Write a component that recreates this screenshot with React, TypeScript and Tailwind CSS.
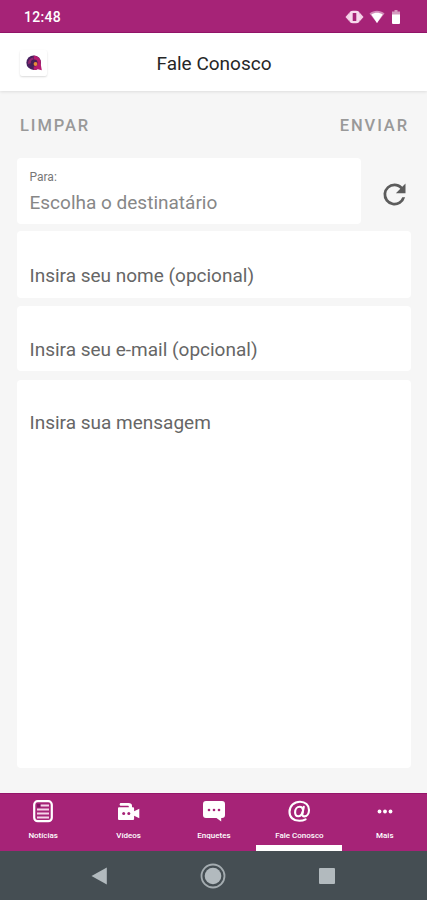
import { useState, type ReactNode } from 'react'

function NewsIcon() {
  return <svg width="22" height="24" viewBox="0 0 22 24" fill="none" stroke="#fff">
    <rect x="2.200" y="2.200" width="17.600" height="20" rx="3.500" strokeWidth="2.200" />
    <path d="M5 6.500h12M5 10.500h12M5 14.500h12M5 18.500h12" strokeWidth="1.800" stroke="#f3d5e9" />
    <rect x="5" y="5" width="3.600" height="3.400" fill="#7d1560" stroke="none" />
  </svg>
}

function VideoIcon() {
  return <svg width="24" height="24" viewBox="0 0 24 24" fill="#fff">
    <path d="M4 4h7.500c2.200 0 3.500 1 3.500 2.800v1.500h.7c.9 0 1.400.5 1.400 1.400v2.500l5.200-2.500v9.600l-5.200-2.500v2.900c0 .9-.5 1.400-1.400 1.400H2.400c-.9 0-1.400-.5-1.400-1.400v-10c0-.9.5-1.400 1.400-1.400h9.400v-.5c0-.7-.4-1-1-1H4C2.200 6.800 2.200 4 4 4z" />
    <circle cx="6.700" cy="14.500" r="1.500" fill="#a62377" />
    <circle cx="11.800" cy="14.500" r="1.500" fill="#a62377" />
  </svg>
}

function PollIcon() {
  return <svg width="24" height="24" viewBox="0 0 24 24" fill="#fff">
    <path d="M4 2h16a3 3 0 0 1 3 3v11a3 3 0 0 1-3 3h-.8v3.500L14.500 19H4a3 3 0 0 1-3-3V5a3 3 0 0 1 3-3z" />
    <g fill="#a62377"><circle cx="7" cy="11" r="1.300" /><circle cx="12" cy="11" r="1.300" /><circle cx="17" cy="11" r="1.300" /></g>
  </svg>
}

function AtIcon() {
  return <svg width="24" height="24" viewBox="0 0 24 24" fill="none" stroke="#fff" strokeWidth="2.100" strokeLinecap="round">
    <path d="M18.600 20.300c-1.800 1-4 1.500-6.200 1.500C6.300 21.800 2.500 18.200 2.500 13 2.500 7 7.200 2.700 13 2.700c5.400 0 9 3.500 9 8.200 0 4-2.200 6.500-4.600 6.500-1.700 0-2.300-1.200-2-2.700l1.400-6.900" />
    <path d="M15.900 10.600c-.3-1.800-1.500-2.800-3.200-2.800-2.700 0-4.600 2.500-4.600 5.500 0 2.300 1.200 3.900 3.100 3.900 2.100 0 3.800-1.700 4.400-4.200" />
  </svg>
}

function MoreIcon() {
  return <svg width="24" height="24" viewBox="0 0 24 24" fill="#fff">
    <circle cx="6.500" cy="12.500" r="1.900" /><circle cx="12" cy="12.500" r="1.900" /><circle cx="17.500" cy="12.500" r="1.900" />
  </svg>
}

const tabs: { label: string; icon: ReactNode }[] = [
  { label: 'Notícias', icon: <NewsIcon /> },
  { label: 'Vídeos', icon: <VideoIcon /> },
  { label: 'Enquetes', icon: <PollIcon /> },
  { label: 'Fale Conosco', icon: <AtIcon /> },
  { label: 'Mais', icon: <MoreIcon /> },
]

function StatusBar() {
  return <div className="h-[33px] shrink-0 bg-[#a62377] border-b border-[#94156a] flex items-center justify-between pl-6 pr-[27px] pt-[2px] text-white">
    <span className="text-[14px] font-medium tracking-[0.3px]">12:48</span>
    <div className="flex items-center">
      <svg width="19" height="16" viewBox="0 0 19 16" className="mr-[5px]">
        <path d="M.5 8 4 4v8zM18.500 8 15 4v8z" fill="#f3d0e6" />
        <rect x="4" y="1.800" width="11" height="12.400" rx="4" fill="#f6d9ec" />
        <rect x="7.700" y="4" width="3.600" height="8" rx=".5" fill="#a62377" />
      </svg>
      <svg width="16" height="14" viewBox="0 0 16 14" className="mr-[7px]">
        <path d="M.5 3.500C5-.3 11-.3 15.500 3.500L8 13z" fill="#d28ab8" />
        <path d="M2.300 4.500c3.500-2.200 7.900-2.200 11.400 0L8 13z" fill="#fff" />
      </svg>
      <svg width="8" height="14" viewBox="0 0 8 14">
        <path d="M2.500 0h3v1.500H8V5H0V1.500h2.500z" fill="#d59abf" />
        <path d="M0 4.500h8V13a1 1 0 0 1-1 1H1a1 1 0 0 1-1-1z" fill="#fff" />
      </svg>
    </div>
  </div>
}

function Header() {
  return <header className="relative z-10 h-[58px] shrink-0 bg-white flex items-center shadow-[0_1px_3px_rgba(0,0,0,0.1)]">
    <div className="w-[27px] ml-5 h-[26px] mt-[1px] rounded-[2px] bg-white shadow-[0_1px_2px_rgba(0,0,0,0.15)] flex items-center justify-center">
      <svg width="18" height="18" viewBox="0 0 18 18">
        <circle cx="8.700" cy="8.700" r="7.300" fill="#49205f" />
        <path d="M8.700 1.400a7.300 7.300 0 0 1 7.100 9l1 5.800-4-1A7.300 7.300 0 0 1 8.700 16z" fill="#b51b70" />
        <path d="M3 10a6 6 0 0 1 5-6.500l1 5z" fill="#8f266f" />
        <circle cx="9.200" cy="9" r="3.400" fill="#452056" />
        <circle cx="10.500" cy="10" r="1.900" fill="#e98b3a" />
      </svg>
    </div>
    <h1 className="flex-1 text-center pr-[46px] pt-[4px] text-[19px] text-[#262626]">Fale Conosco</h1>
  </header>
}

const fieldClass = 'block w-full bg-white rounded-[4px] px-[12.5px] text-[19px] leading-[24px] text-[#505050] placeholder:text-[#666] placeholder:opacity-100 outline-none'

export default function App() {
  const [nome, setNome] = useState('')
  const [email, setEmail] = useState('')
  const [mensagem, setMensagem] = useState('')

  const limpar = () => {
    setNome('')
    setEmail('')
    setMensagem('')
  }

  return <div className="w-full h-[900px] flex flex-col overflow-hidden bg-[#f6f6f6] font-[Roboto,sans-serif]">
    <StatusBar />
    <Header />
    <main className="flex-1 flex flex-col pl-[17px] pr-4 min-h-0">
      <div className="h-[67px] shrink-0 flex items-center justify-between pl-[3px] pr-[2px] pt-[3px] text-[16.5px] font-medium tracking-[1.9px] text-[#999]">
        <button type="button" onClick={limpar}>LIMPAR</button>
        <button type="button">ENVIAR</button>
      </div>
      <div className="flex items-center shrink-0">
        <button type="button" className="w-[344px] h-[66px] bg-white rounded-[4px] px-[12.5px] pt-[11px] flex flex-col items-start">
          <span className="text-[12px] leading-4 text-[#777]">Para:</span>
          <span className="text-[19px] leading-6 mt-[6px] text-[#878787]">Escolha o destinatário</span>
        </button>
        <button type="button" aria-label="Recarregar" className="ml-[17px] mt-[7px]">
          <svg width="33" height="33" viewBox="0 0 24 24" fill="#5c5c5c">
            <path d="M17.650 6.350A7.958 7.958 0 0 0 12 4a8 8 0 1 0 7.730 10h-2.080A6 6 0 1 1 12 6c1.660 0 3.140.69 4.220 1.780L13 11h7V4z" />
          </svg>
        </button>
      </div>
      <input value={nome} onChange={event => setNome(event.target.value)} placeholder="Insira seu nome (opcional)" className={`${fieldClass} mt-[7px] h-[67px] pt-[21px] shrink-0`} />
      <input value={email} onChange={event => setEmail(event.target.value)} placeholder="Insira seu e-mail (opcional)" className={`${fieldClass} mt-2 h-[65px] pt-[21px] shrink-0`} />
      <textarea value={mensagem} onChange={event => setMensagem(event.target.value)} placeholder="Insira sua mensagem" className={`${fieldClass} mt-[9px] h-[388px] pt-[31px] shrink-0 resize-none`} />
    </main>
    <nav className="h-[58px] shrink-0 bg-[#a62377] border-t border-[#94156a] grid grid-cols-5">
      {tabs.map(tab => <button key={tab.label} type="button" className="flex flex-col items-center pt-[5px] pl-[1px] text-white">
        <span className="h-6">{tab.icon}</span>
        <span className="text-[8px] leading-[10px] mt-[8px] font-medium whitespace-nowrap">{tab.label}</span>
        {tab.label === 'Fale Conosco' && <span className="mt-auto h-[6px] w-[86px] bg-white" />}
      </button>)}
    </nav>
    <div className="h-[49px] shrink-0 bg-[#454e53] flex items-center pl-[91px]">
      <svg width="17" height="20" viewBox="0 0 17 20"><path d="M.5 10 15.800 1.500v17z" fill="#b2babe" /></svg>
      <svg width="26" height="26" viewBox="0 0 26 26" className="ml-[92px]">
        <circle cx="13" cy="13" r="11.500" fill="none" stroke="#a4acb0" strokeWidth="1.800" />
        <circle cx="13" cy="13" r="8.300" fill="#b2babe" />
      </svg>
      <span className="ml-[93px] size-[16px] rounded-[1px] bg-[#b2babe]" />
    </div>
  </div>
}
